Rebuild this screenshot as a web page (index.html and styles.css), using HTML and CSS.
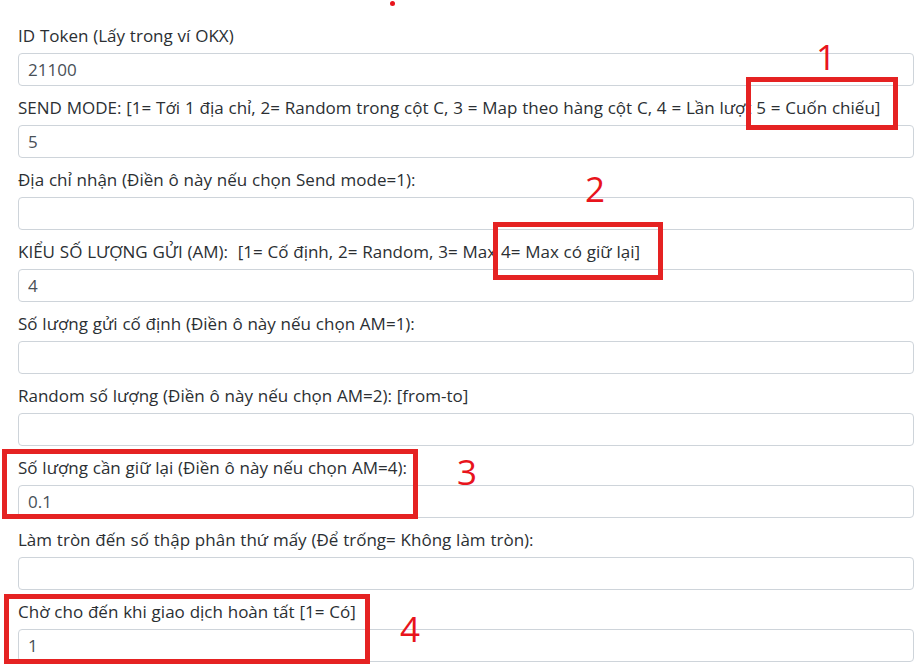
FILE: index.html
```html
<!DOCTYPE html>
<html lang="vi">
<head>
  <meta charset="UTF-8">
  <title>Cấu hình gửi token</title>
  <link rel="stylesheet" href="styles.css">
</head>
<body>

  <div class="page">
    <span class="dot"></span>

    <form class="config-form">
      <div class="form-group">
        <label>ID Token (Lấy trong ví OKX)</label>
        <input type="text" class="form-control" value="21100">
      </div>
      <div class="form-group">
        <label>SEND MODE: [1= Tới 1 địa chỉ, 2= Random trong cột C, 3 = Map theo hàng cột C, 4 = Lần lượt 5 = Cuốn chiếu]</label>
        <input type="text" class="form-control" value="5">
      </div>
      <div class="form-group">
        <label>Địa chỉ nhận (Điền ô này nếu chọn Send mode=1):</label>
        <input type="text" class="form-control" value="">
      </div>
      <div class="form-group">
        <label>KIỂU SỐ LƯỢNG GỬI (AM):&nbsp; [1= Cố định, 2= Random, 3= Max 4= Max có giữ lại]</label>
        <input type="text" class="form-control" value="4">
      </div>
      <div class="form-group">
        <label>Số lượng gửi cố định (Điền ô này nếu chọn AM=1):</label>
        <input type="text" class="form-control" value="">
      </div>
      <div class="form-group">
        <label>Random số lượng (Điền ô này nếu chọn AM=2): [from-to]</label>
        <input type="text" class="form-control" value="">
      </div>
      <div class="form-group">
        <label>Số lượng cần giữ lại (Điền ô này nếu chọn AM=4):</label>
        <input type="text" class="form-control" value="0.1">
      </div>
      <div class="form-group">
        <label>Làm tròn đến số thập phân thứ mấy (Để trống= Không làm tròn):</label>
        <input type="text" class="form-control" value="">
      </div>
      <div class="form-group">
        <label>Chờ cho đến khi giao dịch hoàn tất [1= Có]</label>
        <input type="text" class="form-control" value="1">
      </div>
    </form>

    <!-- chú thích màu đỏ -->
    <div class="mark mark-1"></div>
    <span class="mark-num num-1">1</span>
    <div class="mark mark-2"></div>
    <span class="mark-num num-2">2</span>
    <div class="mark mark-3"></div>
    <span class="mark-num num-3">3</span>
    <div class="mark mark-4"></div>
    <span class="mark-num num-4">4</span>
  </div>

</body>
</html>
```

FILE: styles.css
```css
body {
  font-family: "Open Sans", "Noto Sans", sans-serif;
  background-color: #fff;
  color: #212529;
  margin: 0;
}

.page {
  position: relative;
  height: 667px;
  overflow: hidden;
  padding: 25px 5px 0 18px;
  box-sizing: border-box;
}

.form-group {
  margin-bottom: 11px;
}

.form-group label {
  display: block;
  font-size: 17px;
  line-height: 22px;
  margin-bottom: 6px;
  white-space: nowrap;
  word-spacing: 0.4px;
  color: #2b2f33;
}

.form-control {
  display: block;
  width: 100%;
  height: 33px;
  box-sizing: border-box;
  padding: 0 9px;
  font-family: inherit;
  font-size: 17px;
  color: #495057;
  background: #fff;
  border: 1px solid #ced4da;
  border-radius: 4px;
  outline: none;
}

.dot {
  position: absolute;
  left: 390px;
  top: 1px;
  width: 5px;
  height: 5px;
  border-radius: 50%;
  background: #e8141c;
}

.mark {
  position: absolute;
  border: 5px solid #e52222;
  box-sizing: border-box;
}

.mark-1 { left: 746px; top: 77px;  width: 152px; height: 53px; }
.mark-2 { left: 493px; top: 222px; width: 170px; height: 58px; }
.mark-3 { left: 2px;   top: 449px; width: 416px; height: 70px; }
.mark-4 { left: 4px;   top: 594px; width: 366px; height: 70px; }

.mark-num {
  position: absolute;
  font-size: 35px;
  line-height: 35px;
  color: #e8141c;
}

.num-1 { left: 816px; top: 39px; }
.num-2 { left: 585px; top: 171px; }
.num-3 { left: 457px; top: 454px; }
.num-4 { left: 400px; top: 611px; }
```
